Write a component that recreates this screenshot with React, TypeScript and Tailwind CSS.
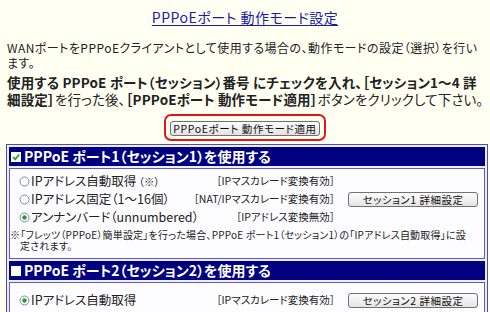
import React from "react";

const Radio = ({ checked }: { checked?: boolean }) => (
  <svg width="11" height="11" viewBox="0 0 11 11" className="shrink-0">
    <circle cx="5.5" cy="5.5" r="4.5" fill="#fff" stroke="#6b8db5" strokeWidth="1" />
    {checked && <circle cx="5.5" cy="5.5" r="2.2" fill="#2b9a2b" />}
  </svg>
);

const Check = ({ checked }: { checked?: boolean }) => (
  <svg width="10" height="10" viewBox="0 0 10 10" className="shrink-0">
    <rect x="0" y="0" width="10" height="10" fill="#fff" />
    {checked && <path d="M2 5 L4.2 7.3 L8.2 2.5" fill="none" stroke="#2ea02e" strokeWidth="1.8" />}
  </svg>
);

const SubButton = ({ label }: { label: string }) => (
  <button className="w-[130px] h-[15px] rounded-[3px] border border-[#707070] bg-gradient-to-b from-[#fdfdfd] to-[#e4e4e4] text-[10.5px] leading-[13px] text-[#111] tracking-[0.5px] whitespace-nowrap">
    {label}
  </button>
);

interface RowProps {
  checked?: boolean;
  label: React.ReactNode;
  mode: string;
  button?: string;
}

const OptionRow = ({ checked, label, mode, button }: RowProps) => (
  <div className="flex items-center h-[18px] leading-[18px]">
    <div className="flex items-center gap-[1px] text-[12.5px] text-[#222] whitespace-nowrap">
      <Radio checked={checked} />
      <span>{label}</span>
    </div>
    <div className="ml-auto text-[10.5px] text-[#222] whitespace-nowrap">{mode}</div>
    <div className="w-[130px] ml-[13px] flex">{button && <SubButton label={button} />}</div>
  </div>
);

const Header = ({ checked, children }: { checked?: boolean; children: React.ReactNode }) => (
  <div className="h-[19px] leading-[19px] bg-[#000080] flex items-center pl-[2px] gap-[3px] text-white font-bold text-[14px] whitespace-nowrap">
    <Check checked={checked} />
    <span>{children}</span>
  </div>
);

export default function App() {
  return (
    <div className="w-[490px] h-[312px] overflow-hidden bg-[#fffff2] font-['Noto_Sans_CJK_JP','Noto_Sans',sans-serif] [font-feature-settings:'palt'] text-[#222]">
      <div className="pt-[9px] text-center text-[14px] leading-[16px]">
        <span className="text-[#1a1aa8] underline underline-offset-2 tracking-[0.5px]">
          PPPoEポート 動作モード設定
        </span>
      </div>
      <p className="mt-[15px] px-[7px] text-[12px] leading-[15px] tracking-[0.45px] whitespace-nowrap">
        WANポートをPPPoEクライアントとして使用する場合の、動作モードの設定（選択）を行い
        <br />
        ます。
      </p>
      <p className="mt-[4px] px-[7px] text-[13.5px] leading-[17px] tracking-[0.15px] whitespace-nowrap">
        <b>使用する PPPoE ポート（セッション）番号 にチェックを入れ、［セッション1～4 詳</b>
        <br />
        <b>細設定］</b>を行った後、<b>［PPPoEポート 動作モード適用］</b>ボタンをクリックして下さい。
      </p>
      <div className="mt-[6px] flex justify-center">
        <div className="w-[162px] h-[27px] border-2 border-[#e41414] rounded-[7px] flex justify-center pt-[5px]">
          <button className="w-[150px] h-[15px] rounded-[3px] border border-[#707070] bg-gradient-to-b from-[#fdfdfd] to-[#e2e2e2] text-[10.5px] leading-[13px] tracking-[0.6px] text-[#111] whitespace-nowrap">
            PPPoEポート 動作モード適用
          </button>
        </div>
      </div>
      <div className="mt-[3px] ml-[6px] w-[482px] border border-[#4a4ac4] bg-[#eeeeff] p-[2px] flex flex-col gap-[2px]">
        <Header checked>PPPoE ポート1（セッション1）を使用する</Header>
        <div className="border border-[#5a5ac8] bg-[#fdfdff] pl-[9px] pr-[6px] pt-[3px] pb-[7px]">
          <OptionRow
            label={
              <>
                IPアドレス自動取得<span className="text-[10.5px]"> （※）</span>
              </>
            }
            mode="［IPマスカレード変換有効］"
          />
          <OptionRow label="IPアドレス固定（1～16個）" mode="［NAT/IPマスカレード変換有効］" button="セッション1 詳細設定" />
          <OptionRow checked label="アンナンバード（unnumbered）" mode="［IPアドレス変換無効］" />
          <div className="mt-[3px] -ml-[9px] text-[10px] leading-[11px] tracking-[0.2px] whitespace-nowrap">
            ※「フレッツ（PPPoE）簡単設定」を行った場合、PPPoE ポート1（セッション1）の「IPアドレス自動取得」に設
            <br />
            <span className="pl-[10px]">定されます。</span>
          </div>
        </div>
        <Header>PPPoE ポート2（セッション2）を使用する</Header>
        <div className="border border-[#5a5ac8] bg-[#fdfdff] pl-[9px] pr-[6px] pt-[8px] pb-[8px]">
          <OptionRow checked label="IPアドレス自動取得" mode="［IPマスカレード変換有効］" button="セッション2 詳細設定" />
        </div>
      </div>
    </div>
  );
}
